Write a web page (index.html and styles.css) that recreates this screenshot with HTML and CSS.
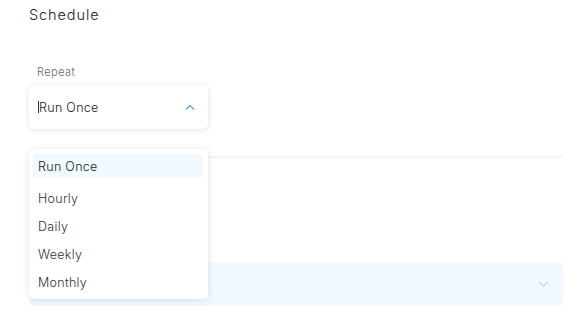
FILE: index.html
```html
<!DOCTYPE html>
<html lang="en">
<head>
<meta charset="utf-8">
<title>Schedule</title>
<link rel="stylesheet" href="styles.css">
</head>
<body>
<div class="page">
  <h2 class="title">Schedule</h2>
  <div class="field">
    <div class="label">Repeat</div>
    <div class="select-wrap">
      <div class="select">
        <span class="value"><span class="caret"></span>Run Once</span>
        <svg class="chev-up" width="10" height="6" viewBox="0 0 10 6"><path d="M1 5.5 L5 1.5 L9 5.5" fill="none" stroke="#4aa3e0" stroke-width="1.2"/></svg>
      </div>
      <ul class="menu">
        <li class="item active">Run Once</li>
        <li class="item">Hourly</li>
        <li class="item">Daily</li>
        <li class="item">Weekly</li>
        <li class="item">Monthly</li>
      </ul>
    </div>
  </div>
  <div class="divider"></div>
  <div class="box">
    <svg class="chev-down" width="11" height="6" viewBox="0 0 11 6"><path d="M1 1 L5.5 5 L10 1" fill="none" stroke="#c8cdd2" stroke-width="1.1"/></svg>
  </div>
</div>
</body>
</html>
```
FILE: styles.css
```css
html, body {
  margin: 0;
  padding: 0;
  background: #ffffff;
}
body {
  font-family: Inter, "Open Sans", sans-serif;
  color: #444;
}
.page {
  padding: 5px 18px 0 29px;
}
.title {
  margin: 0;
  font-size: 14.5px;
  line-height: 20px;
  font-weight: 300;
  letter-spacing: 0.9px;
  color: #222;
}
.field {
  margin-top: 40px;
}
.label {
  padding-left: 8px;
  font-size: 11px;
  line-height: 14px;
  font-weight: 300;
  letter-spacing: 0.45px;
  color: #6a6a6a;
}
.select-wrap {
  position: relative;
  width: 179px;
  margin-top: 6px;
}
.select {
  height: 44px;
  box-sizing: border-box;
  padding: 0 13px 0 9px;
  display: flex;
  align-items: center;
  justify-content: space-between;
  background: #fff;
  border-radius: 5px;
  box-shadow: 0 1px 6px rgba(0, 0, 0, 0.12);
}
.value {
  display: flex;
  align-items: center;
  font-size: 12.5px;
  font-weight: 300;
  letter-spacing: 0.3px;
  color: #222;
}
.caret {
  display: inline-block;
  width: 1px;
  height: 12px;
  background: #333;
}
.chev-up {
  display: block;
}
.menu {
  position: absolute;
  top: 64px;
  left: 0;
  right: 0;
  z-index: 2;
  margin: 0;
  padding: 5px 5px 3px 4px;
  list-style: none;
  background: #fff;
  border-radius: 5px;
  box-shadow: 0 1px 7px rgba(20, 60, 90, 0.14);
}
.item {
  height: 28px;
  display: flex;
  align-items: center;
  padding-left: 5px;
  font-size: 12.5px;
  font-weight: 300;
  letter-spacing: 0.3px;
  color: #333;
  border-radius: 4px;
}
.item.active {
  height: 24px;
  margin-bottom: 6px;
  background: #f0f9fe;
  color: #222;
}
.divider {
  margin-top: 27px;
  height: 2px;
  background: #f3f3f3;
}
.box {
  margin-top: 104px;
  height: 44px;
  box-sizing: border-box;
  padding-right: 14px;
  display: flex;
  align-items: center;
  justify-content: flex-end;
  background: #f1f9fe;
  border-radius: 5px;
}
.chev-down {
  display: block;
}
```
